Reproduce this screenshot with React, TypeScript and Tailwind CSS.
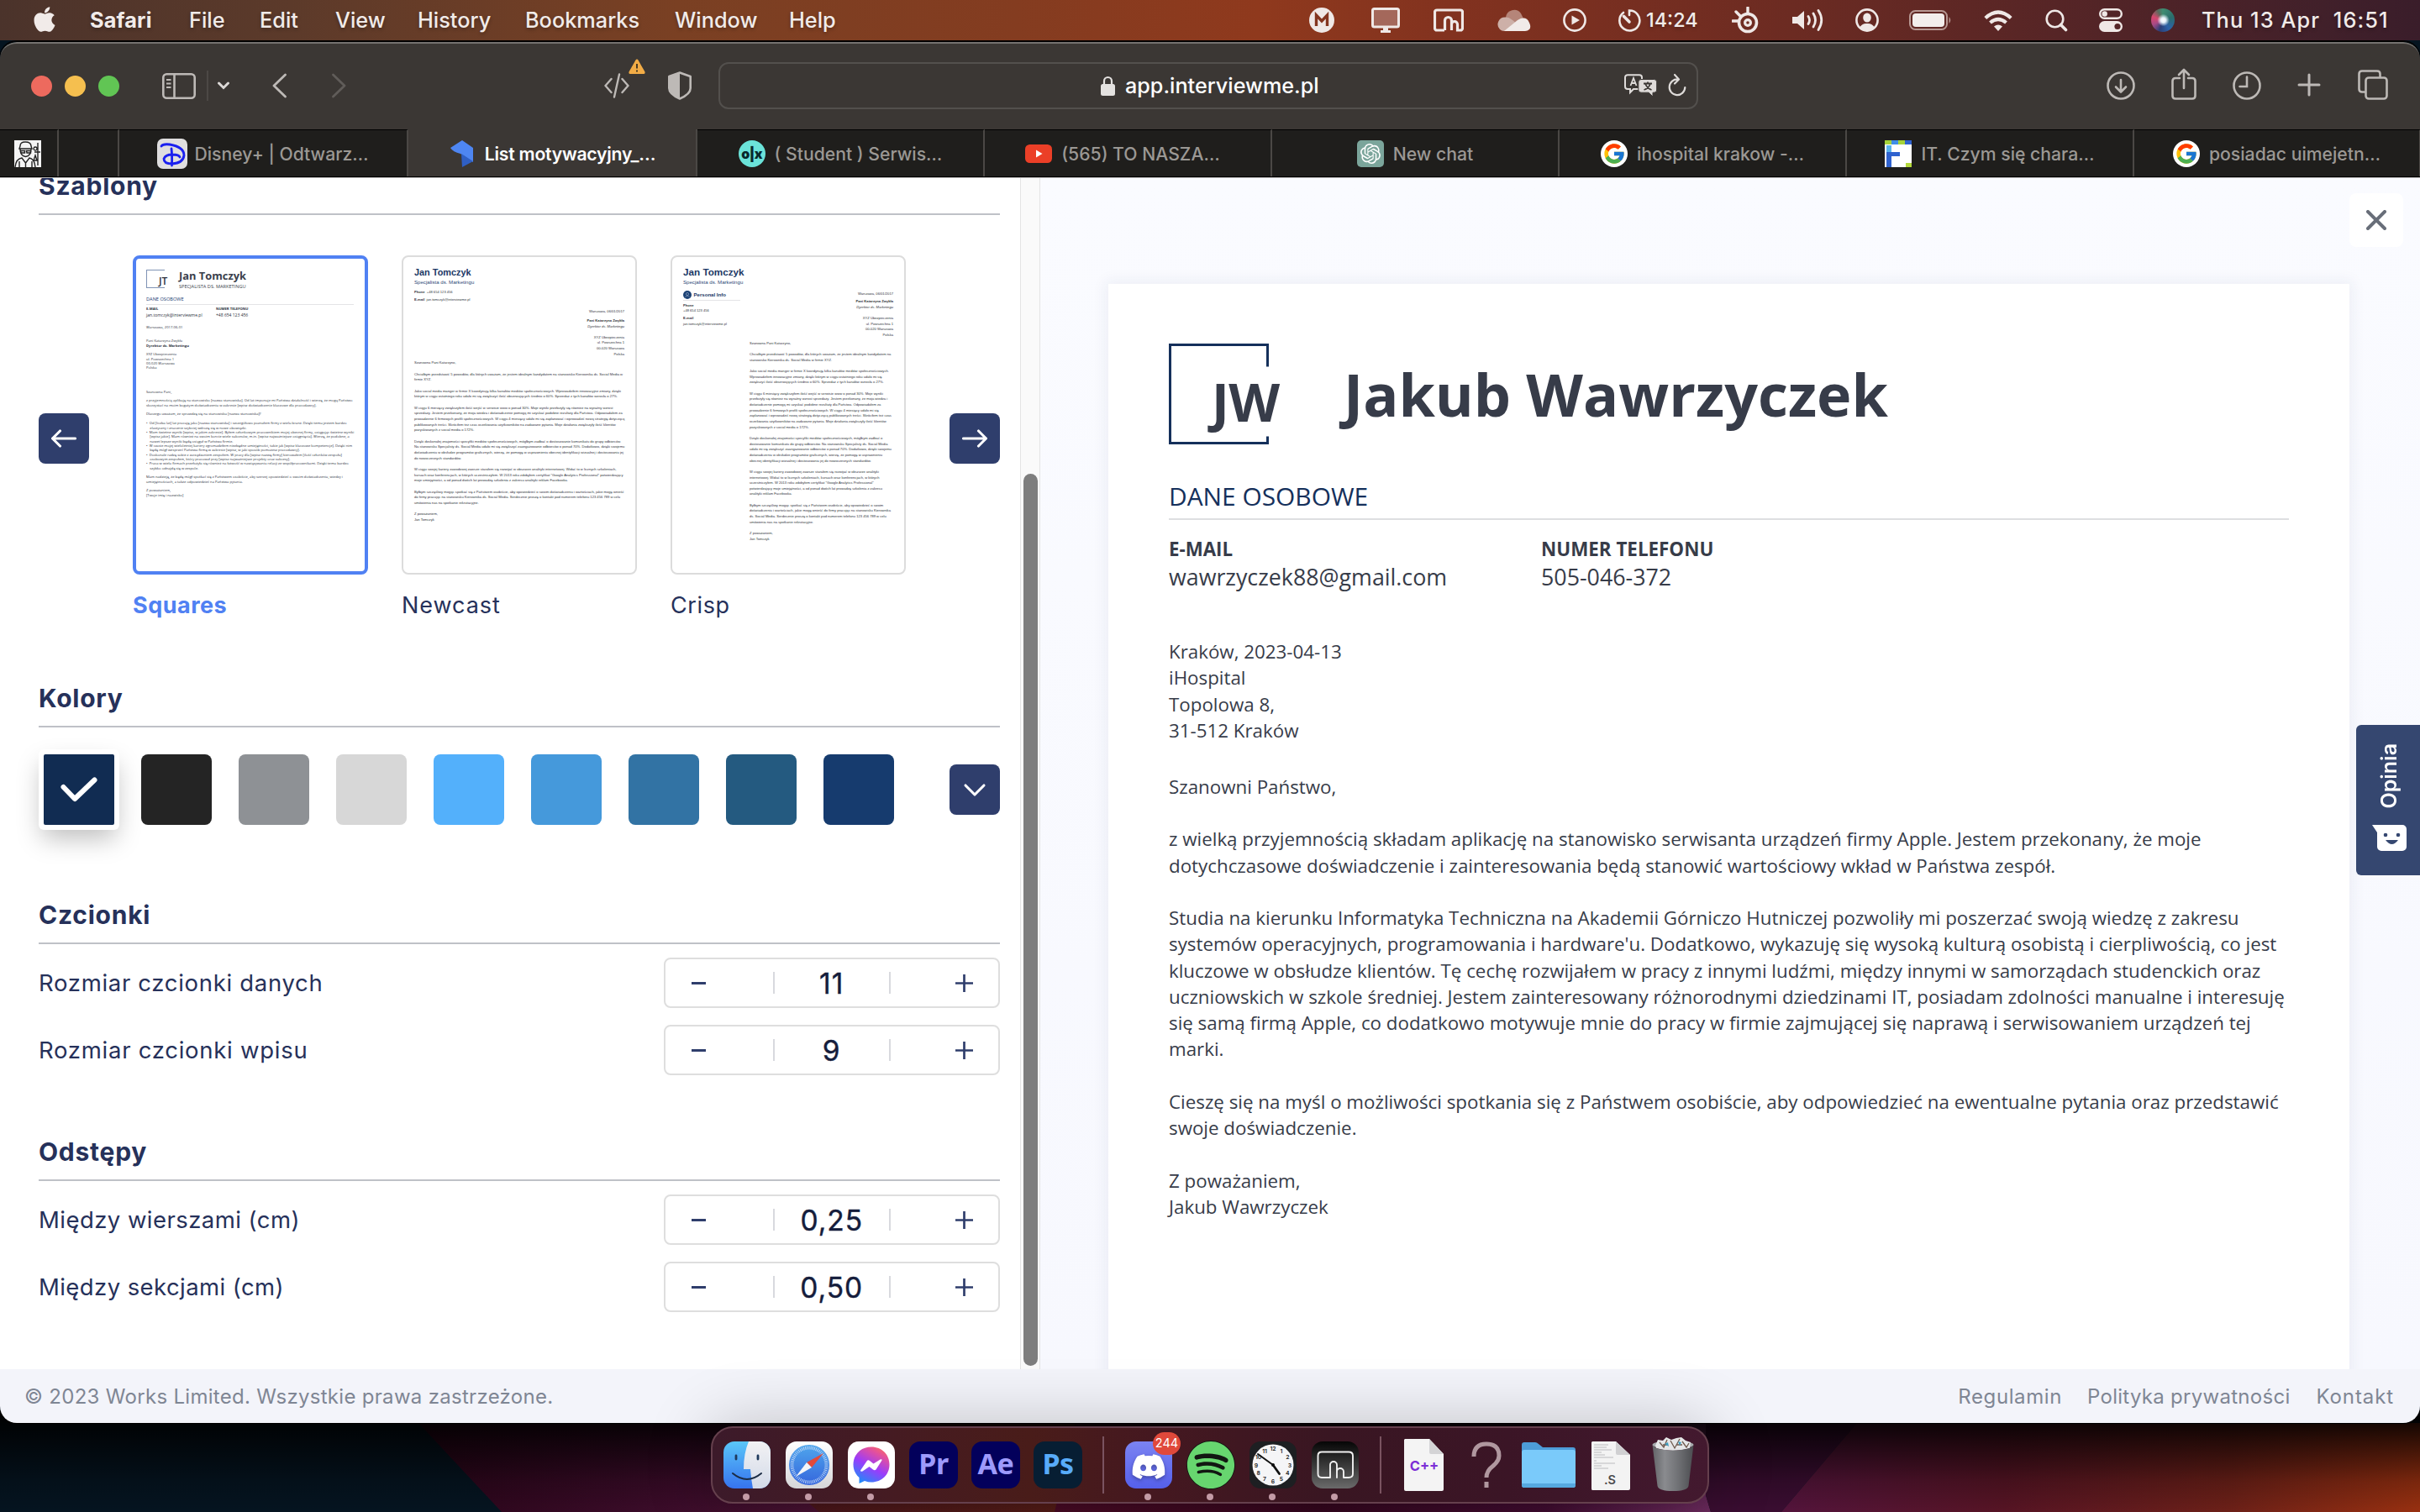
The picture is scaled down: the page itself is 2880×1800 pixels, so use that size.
import React from "react";
import { FaApple, FaDiscord, FaSpotify } from "react-icons/fa";
import { FcGoogle } from "react-icons/fc";
import { SiOpenai } from "react-icons/si";

/* ---------- Desktop ---------- */

function Wallpaper() {
  return (
    <svg className="absolute inset-0 h-[1800px] w-[2880px]" viewBox="0 0 2880 1800" preserveAspectRatio="none">
      <defs>
        <linearGradient id="wa" x1="0" x2="1" y1="0" y2="0">
          <stop offset="0" stopColor="#2a0519" />
          <stop offset="0.6" stopColor="#3c0c2a" />
          <stop offset="1" stopColor="#4a1233" />
        </linearGradient>
        <linearGradient id="wb" x1="0" x2="1" y1="0" y2="0">
          <stop offset="0" stopColor="#4a161a" />
          <stop offset="1" stopColor="#541c16" />
        </linearGradient>
        <linearGradient id="wc" x1="0" x2="1" y1="0" y2="0">
          <stop offset="0" stopColor="#480a24" />
          <stop offset="0.4" stopColor="#34061e" />
          <stop offset="0.75" stopColor="#400c30" />
          <stop offset="1" stopColor="#6a2a5c" />
        </linearGradient>
        <linearGradient id="wd" x1="0" x2="1" y1="0" y2="0">
          <stop offset="0" stopColor="#54143c" />
          <stop offset="0.35" stopColor="#561424" />
          <stop offset="0.7" stopColor="#6c2018" />
          <stop offset="1" stopColor="#983010" />
        </linearGradient>
        <linearGradient id="ws" x1="0" x2="0" y1="0" y2="1">
          <stop offset="0" stopColor="#000" stopOpacity="1" />
          <stop offset="0.3" stopColor="#000" stopOpacity="0.65" />
          <stop offset="0.7" stopColor="#000" stopOpacity="0.2" />
          <stop offset="1" stopColor="#000" stopOpacity="0" />
        </linearGradient>
      </defs>
      <rect width="2880" height="1800" fill="#051420" />
      <path d="M498 1694H1000L977 1800H597z" fill="url(#wa)" />
      <path d="M957 1694H1290L1262 1800H975L957 1785z" fill="url(#wb)" />
      <path d="M1280 1694H2030V1780L2036 1800H1255z" fill="url(#wc)" />
      <path d="M2030 1694H2210L2120 1800H2036L2030 1780z" fill="#3a0d31" />
      <path d="M2210 1694H2880V1800H2120z" fill="url(#wd)" />
      <rect y="1680" width="2880" height="120" fill="url(#ws)" />
      <path d="M635 48H1900V49H635z" fill="#a0671f" />
    </svg>
  );
}

/* ---------- Menu bar ---------- */

const menus: [string, string][] = [
  ["File", "w-[84px]"],
  ["Edit", "w-[90px]"],
  ["View", "w-[98px]"],
  ["History", "w-[128px]"],
  ["Bookmarks", "w-[178px]"],
  ["Window", "w-[136px]"],
  ["Help", "w-[60px]"],
];

function MenuBar() {
  return (
    <div className="relative flex h-12 items-center bg-[linear-gradient(90deg,#4b332b_0%,#5c3a2a_12%,#7a4023_28%,#843c20_42%,#8f391d_52%,#82321f_60%,#6c2b22_74%,#562526_85%,#41202a_96%,#3a1d2a_100%)] text-[25.3px] font-medium text-[#f1ebe9] [text-shadow:0_2px_4px_rgba(0,0,0,0.3)]">
      <div className="flex w-[1558px] shrink-0 items-center">
        <FaApple className="mb-[2px] ml-[39px] h-[34px] w-[28px] shrink-0" />
        <span className="ml-[40px] w-[118px] shrink-0 font-bold tracking-[0.150px]">Safari</span>
        {menus.map(([m, w]) => (
          <span key={m} className={`${w} shrink-0`}>
            {m}
          </span>
        ))}
      </div>
      <svg className="h-[30px] w-[30px] shrink-0" viewBox="0 0 30 30">
        <circle cx="15" cy="15" r="15" fill="#efe8e6" />
        <path d="M8.500 22V9L15 16L21.500 9V22" fill="none" stroke="#83351f" strokeWidth="3.400" />
      </svg>
      <svg className="ml-[44px] h-[30px] w-[34px] shrink-0" viewBox="0 0 34 30">
        <rect x="1.500" y="1.500" width="31" height="21.500" rx="2" fill="#a4685b" stroke="#efe8e6" strokeWidth="3" />
        <path d="M14 23h6v4h3v3H11v-3h3z" fill="#efe8e6" />
      </svg>
      <svg className="ml-[40px] h-[28px] w-[36px] shrink-0" viewBox="0 0 36 28">
        <path d="M13 26H4a2.500 2.500 0 0 1-2.500-2.500V4.500A2.500 2.500 0 0 1 4 2H32a2.500 2.500 0 0 1 2.500 2.500V23.500A2.500 2.500 0 0 1 32 26H28.500V19a3.500 3.500 0 0 0-7 0v7V14.500a4 4 0 0 0-8 0V26" fill="none" stroke="#efe8e6" strokeWidth="3.200" />
      </svg>
      <svg className="ml-[40px] h-[28px] w-[40px] shrink-0" viewBox="0 0 40 28">
        <path d="M10 11A10 10 0 0 1 28 6L31 12L20 20z" fill="#b58579" />
        <path d="M3 25A8.500 8.500 0 0 1 9 10.500C14 10 18 14 22 17L14 27H8Q5 27 3 25z" fill="#cdb0a8" />
        <path d="M8 27L24 14Q34 8 38 17Q42 26 33 27z" fill="#f1ebe9" />
      </svg>
      <svg className="ml-[38px] h-[28px] w-[28px] shrink-0" viewBox="0 0 28 28">
        <circle cx="14" cy="14" r="12.600" fill="none" stroke="#efe8e6" strokeWidth="2.600" />
        <path d="M10.500 8.500L20 14L10.500 19.500z" fill="#efe8e6" />
      </svg>
      <svg className="ml-[37px] h-[28px] w-[28px] shrink-0" viewBox="0 0 28 28" fill="none" stroke="#efe8e6" strokeWidth="2.600" strokeLinecap="round">
        <path d="M7 5A12 12 0 1 0 14 2.500V8" />
        <path d="M7.500 9.500L14 16" strokeWidth="3.600" />
      </svg>
      <span className="ml-[6px] w-[62px] shrink-0 text-[23.400px]">14:24</span>
      <svg className="ml-[40px] h-[32px] w-[32px] shrink-0" viewBox="0 0 32 32" fill="none" stroke="#efe8e6">
        <circle cx="19" cy="19" r="10.500" strokeWidth="3.600" />
        <circle cx="19" cy="19" r="3.400" strokeWidth="3.200" />
        <path d="M19 8V1M1 17H8M5 6L11 12" strokeWidth="3.400" strokeLinecap="round" />
      </svg>
      <svg className="ml-[40px] h-[28px] w-[40px] shrink-0" viewBox="0 0 40 28">
        <path d="M0 10H6L14 3V25L6 18H0z" fill="#efe8e6" />
        <path d="M19 9.500Q22 14 19 18.500M25 6Q30 14 25 22M31 2.500Q38.500 14 31 25.500" fill="none" stroke="#efe8e6" strokeWidth="2.800" strokeLinecap="round" />
      </svg>
      <svg className="ml-[35px] h-[28px] w-[28px] shrink-0" viewBox="0 0 28 28">
        <circle cx="14" cy="14" r="12.600" fill="none" stroke="#efe8e6" strokeWidth="2.600" />
        <ellipse cx="14" cy="11" rx="4.800" ry="5.600" fill="#efe8e6" />
        <path d="M5 23Q8 17.500 14 18Q20 17.500 23 23Q14 30 5 23z" fill="#efe8e6" />
      </svg>
      <svg className="ml-[36px] h-[24px] w-[51px] shrink-0" viewBox="0 0 51 24">
        <rect x="1" y="1" width="44" height="22" rx="6.500" fill="none" stroke="#b79792" strokeWidth="2" />
        <rect x="4" y="4" width="38" height="16" rx="4" fill="#f3eeec" />
        <path d="M47.500 8Q51 12 47.500 16z" fill="#b79792" />
      </svg>
      <svg className="ml-[38px] h-[25px] w-[34px] shrink-0" viewBox="0 0 34 25" fill="none" stroke="#efe8e6" strokeWidth="4.200">
        <path d="M1.800 9.500Q17 -4.500 32.200 9.500" />
        <path d="M7.500 15Q17 7 26.500 15" />
        <path d="M12 19.500Q17 15.500 22 19.500L17 25z" fill="#efe8e6" stroke="none" />
      </svg>
      <svg className="ml-[39px] h-[27px] w-[27px] shrink-0" viewBox="0 0 27 27" fill="none" stroke="#efe8e6">
        <circle cx="11.500" cy="11.500" r="9.800" strokeWidth="2.600" />
        <path d="M18.500 18.500L24.500 24.500" strokeWidth="3.600" strokeLinecap="round" />
      </svg>
      <svg className="ml-[37px] h-[28px] w-[28px] shrink-0" viewBox="0 0 28 28">
        <rect x="1.200" y="1.200" width="25.600" height="10.600" rx="5.300" fill="none" stroke="#efe8e6" strokeWidth="2.400" />
        <circle cx="6.700" cy="6.500" r="3.200" fill="#efe8e6" />
        <rect y="15" width="28" height="13" rx="6.500" fill="#efe8e6" />
        <circle cx="22" cy="21.500" r="3.600" fill="#552527" />
      </svg>
      <div className="ml-[34px] h-[28px] w-[28px] shrink-0 rounded-full bg-[radial-gradient(circle_at_52%_50%,#fff_0%,#e7f3fb_14%,rgba(255,255,255,0)_36%),conic-gradient(from_0deg,#3f8d72,#2b6d6c_20%,#2c62a8_40%,#2b3f78_55%,#a84a86_68%,#d8476e_80%,#5c6a5c_92%,#3f8d72)]" />
      <span className="ml-[32px] shrink-0 whitespace-pre tracking-[1.100px]">{"Thu 13 Apr  16:51"}</span>
    </div>
  );
}

/* ---------- Safari toolbar ---------- */

function Toolbar() {
  return (
    <div className="flex h-[104px] items-center rounded-t-[20px] border-t-2 border-[#75726f] bg-[#3b3734] pb-[2px]">
      <div className="ml-[37px] h-[25px] w-[25px] shrink-0 rounded-full bg-[#ed6a5e]" />
      <div className="ml-[15px] h-[25px] w-[25px] shrink-0 rounded-full bg-[#f5bf4f]" />
      <div className="ml-[15px] h-[25px] w-[25px] shrink-0 rounded-full bg-[#61c554]" />
      <svg className="ml-[51px] h-[31px] w-[40px] shrink-0" viewBox="0 0 40 31" fill="none" stroke="#bdb9b6" strokeWidth="2.600">
        <rect x="1.300" y="1.300" width="37.400" height="28.400" rx="4" />
        <path d="M14.500 1V30" />
        <path d="M5 8H10.500M5 12.500H10.500M5 17H10.500" strokeWidth="2" />
      </svg>
      <div className="ml-[13px] h-9 w-[2px] shrink-0 bg-[#4c4845]" />
      <svg className="ml-[10px] h-[10px] w-[16px] shrink-0" viewBox="0 0 16 10" fill="none" stroke="#dcd9d7" strokeWidth="3" strokeLinecap="round">
        <path d="M2.500 2L8 7.500L13.500 2" />
      </svg>
      <svg className="ml-[50px] h-[30px] w-[17px] shrink-0" viewBox="0 0 17 30" fill="none" stroke="#bdb9b6" strokeWidth="2.800" strokeLinecap="round" strokeLinejoin="round">
        <path d="M15.500 2L2 15L15.500 28" />
      </svg>
      <svg className="ml-[54px] h-[30px] w-[17px] shrink-0" viewBox="0 0 17 30" fill="none" stroke="#605c59" strokeWidth="2.800" strokeLinecap="round" strokeLinejoin="round">
        <path d="M1.500 2L15 15L1.500 28" />
      </svg>
      <div className="relative ml-[307px] h-[30px] w-[30px] shrink-0">
        <svg className="h-[30px] w-[30px]" viewBox="0 0 30 30" fill="none" stroke="#bdb9b6" strokeWidth="2.400" strokeLinecap="round">
          <path d="M8.500 7L1.500 15L8.500 23M21.500 7L28.500 15L21.500 23M18 1.500L12 28.500" />
        </svg>
        <svg className="absolute -top-[17px] left-[29px] h-[18px] w-[20px]" viewBox="0 0 20 18">
          <path d="M10 0.500Q11 0.500 11.500 1.500L19.500 15.500Q20 18 18 18H2Q0 18 0.500 15.500L8.500 1.500Q9 0.500 10 0.500z" fill="#f2ac46" />
          <path d="M10 6V11.500M10 13.500V15.500" stroke="#4a3a22" strokeWidth="2" />
        </svg>
      </div>
      <svg className="ml-[46px] h-[34px] w-[28px] shrink-0" viewBox="0 0 28 34">
        <path d="M14 1.500L26.700 6V20Q26.700 27 14 32.500Q1.300 27 1.300 20V6z" fill="none" stroke="#bdb9b6" strokeWidth="2.600" strokeLinejoin="round" />
        <path d="M14 1.500V32.500Q1.300 27 1.300 20V6z" fill="#bdb9b6" />
      </svg>
      <div className="ml-[32px] flex h-[56px] w-[1166px] shrink-0 items-center rounded-xl border-2 border-[#53504d]">
        <svg className="ml-[453px] h-[24px] w-[17px] shrink-0" viewBox="0 0 17 24">
          <rect y="10" width="17" height="14" rx="2.500" fill="#e4e2e0" />
          <path d="M4 11V6.500a4.500 4.500 0 0 1 9 0V11" fill="none" stroke="#e4e2e0" strokeWidth="2.200" />
        </svg>
        <span className="ml-[12px] w-[240px] shrink-0 pt-[2px] text-[25.200px] font-medium leading-none text-white">app.interviewme.pl</span>
        <svg className="ml-[354px] h-[28px] w-[39px] shrink-0" viewBox="0 0 39 28">
          <path d="M4 1.200H18a3 3 0 0 1 3 3V15a3 3 0 0 1-3 3H11L7 22V18H4a3 3 0 0 1-3-3V4.200a3 3 0 0 1 3-3z" fill="none" stroke="#dedbd9" strokeWidth="2" />
          <path d="M7.500 14L11 5L14.500 14M8.600 11H13.400" fill="none" stroke="#dedbd9" strokeWidth="1.800" />
          <path d="M20 6.500H35.500a3.200 3.200 0 0 1 3.200 3.200V19a3.200 3.200 0 0 1-3.200 3.200H34V27L29 22.200H20a3.200 3.200 0 0 1-3.200-3.200V9.700A3.200 3.200 0 0 1 20 6.500z" fill="#dedbd9" stroke="#3b3734" strokeWidth="1" />
          <path d="M23 11.500H33M28 9.500V11.500M31 11.500Q29.500 17 23.500 19M25 11.500Q27 17 32.500 19" fill="none" stroke="#3b3734" strokeWidth="1.800" />
        </svg>
        <svg className="mb-[3px] ml-[13px] h-[28px] w-[22px] shrink-0" viewBox="0 0 22 28" fill="none" stroke="#dedbd9" strokeWidth="2.200" strokeLinecap="round" strokeLinejoin="round">
          <path d="M12 7.500A9.300 9.300 0 1 0 20.300 17M8 2L13 7.500L8 12.500" />
        </svg>
      </div>
      <svg className="ml-[486px] h-[34px] w-[34px] shrink-0" viewBox="0 0 34 34" fill="none" stroke="#bdb9b6" strokeWidth="2.600" strokeLinecap="round" strokeLinejoin="round">
        <circle cx="17" cy="17" r="15.500" />
        <path d="M17 10V24M11 18.500L17 24.500L23 18.500" />
      </svg>
      <svg className="mb-[5px] ml-[43px] h-[38px] w-[30px] shrink-0" viewBox="0 0 30 38" fill="none" stroke="#bdb9b6" strokeWidth="2.600" strokeLinecap="round" strokeLinejoin="round">
        <path d="M10 12H5Q1.500 12 1.500 15.500V33Q1.500 36.500 5 36.500H25Q28.500 36.500 28.500 33V15.500Q28.500 12 25 12H20M15 24V2M9 8L15 2L21 8" />
      </svg>
      <svg className="ml-[43px] h-[34px] w-[34px] shrink-0" viewBox="0 0 34 34" fill="none" stroke="#bdb9b6" strokeWidth="2.600" strokeLinecap="round">
        <circle cx="17" cy="17" r="15.500" />
        <path d="M17 6.500V18H8.500" />
      </svg>
      <svg className="mb-[2px] ml-[43px] h-[28px] w-[28px] shrink-0" viewBox="0 0 28 28" fill="none" stroke="#bdb9b6" strokeWidth="3" strokeLinecap="round">
        <path d="M14 2V26M2 14H26" />
      </svg>
      <svg className="mb-[2px] ml-[44px] h-[36px] w-[36px] shrink-0" viewBox="0 0 36 36" fill="none" stroke="#bdb9b6" strokeWidth="2.600">
        <path d="M9 26.500H5Q1.500 26.500 1.500 23V5Q1.500 1.500 5 1.500H23Q26.500 1.500 26.500 5V9" />
        <rect x="9.500" y="9.500" width="25" height="25" rx="3.500" />
      </svg>
    </div>
  );
}

/* ---------- Tabs ---------- */

const Google = () => (
  <span className="flex h-8 w-8 shrink-0 items-center justify-center rounded-full bg-white">
    <FcGoogle className="h-[28px] w-[28px]" />
  </span>
);

function Tab({ w, icon, title, active }: { w: string; icon: React.ReactNode; title: string; active?: boolean }) {
  return (
    <div
      className={`${w} flex shrink-0 items-center justify-center gap-[11px] border-r-2 border-[#4b4845] pt-px ${
        active ? "bg-[#3b3734] font-semibold tracking-[-0.250px] text-white" : "border-t border-t-black bg-[#1f1e1c] font-medium text-[#9b9894]"
      }`}
    >
      {icon}
      <span className="whitespace-nowrap pt-[2px]">{title}</span>
    </div>
  );
}

function TabBar() {
  return (
    <div className="flex h-[57px] border-b border-black bg-[#1f1e1c] text-[21.200px]">
      <div className="flex w-[70px] shrink-0 items-center justify-center border-r-2 border-t border-[#4b4845] border-t-black pr-[2px]">
        <svg className="h-8 w-8" viewBox="0 0 32 32" fill="none" stroke="#222" strokeWidth="1.400">
          <rect width="32" height="32" fill="#f4f4f4" stroke="none" />
          <path d="M7 7Q7 2 13 2Q20 2 20 7L21 10H6z" />
          <path d="M7 10Q7 19 13.500 19.500Q20 19 20 10" />
          <path d="M7.500 12.500H12.500V15H8zM14.500 12.500H19.500V15H15z" />
          <path d="M1 32Q2 22 9 21L13.500 27L18 21Q24 22 25 32M13.500 27V32M6 25V32M21 25V32" />
          <path d="M25 8a2 2 0 1 0 .100 0M28 3V30M24 14H31M25 18L23 24H27z" />
        </svg>
      </div>
      <div className="w-[72px] shrink-0 border-r-2 border-t border-[#4b4845] border-t-black" />
      <Tab
        w="w-[344px]"
        title="Disney+ | Odtwarz…"
        icon={
          <svg className="-mr-[3px] h-9 w-9 shrink-0" viewBox="0 0 36 36">
            <rect width="36" height="36" rx="7" fill="#dfdedf" />
            <path d="M5 9Q7 6 15 7Q32 10 32 20Q31 29 18 30Q8 30 8 24Q10 19 18 19Q26 19 27 22M17 12Q18 20 17.500 32" fill="none" stroke="#1a20f0" strokeWidth="2.800" strokeLinecap="round" />
          </svg>
        }
      />
      <Tab
        w="w-[344px]"
        active
        title="List motywacyjny_…"
        icon={
          <svg className="h-8 w-8 shrink-0" viewBox="0 0 32 32">
            <path d="M16 0L29 9V26L14 16Q5 14 2 9z" fill="#4e86f2" />
            <path d="M15 16L29 25L16 32z" fill="#2f5fc4" />
          </svg>
        }
      />
      <Tab
        w="w-[342px]"
        title="( Student ) Serwis…"
        icon={
          <span className="flex h-8 w-8 shrink-0 items-center justify-center rounded-full bg-[#6be3d9] text-[16px] font-black leading-none tracking-[-0.500px] text-[#07282c]">o|x</span>
        }
      />
      <Tab
        w="w-[342px] pr-[12px]"
        title="(565) TO NASZA…"
        icon={
          <svg className="h-[22px] w-[32px] shrink-0" viewBox="0 0 32 22">
            <rect width="32" height="22" rx="5.500" fill="#eb3f27" />
            <path d="M13 6.500L20.500 11L13 15.500z" fill="#fff" />
          </svg>
        }
      />
      <Tab
        w="w-[342px]"
        title="New chat"
        icon={
          <span className="flex h-8 w-8 shrink-0 items-center justify-center rounded-[5px] bg-[#7ba59b]">
            <SiOpenai className="h-[24px] w-[24px] text-white" />
          </span>
        }
      />
      <Tab w="w-[342px]" title="ihospital krakow -…" icon={<Google />} />
      <Tab
        w="w-[342px]"
        title="IT. Czym się chara…"
        icon={
          <svg className="h-8 w-8 shrink-0" viewBox="0 0 32 32">
            <rect width="32" height="32" fill="#fff" />
            <path d="M0 0H8V5H0zM16 0H24V5H16z" fill="#a5d43a" />
            <path d="M8 0H16V5H8z" fill="#3f8ee8" />
            <path d="M24 0H32V5H24z" fill="#2f62cf" />
            <path d="M2 6H8V32H2zM8 14H18V19H8z" fill="#2f62cf" />
            <path d="M2 6H8V14H2z" fill="#59b4ee" />
            <path d="M25 27H32V32H25z" fill="#b4d93c" />
          </svg>
        }
      />
      <Tab w="w-[341px]" title="posiadac uimejetn…" icon={<Google />} />
    </div>
  );
}

/* ---------- Left panel ---------- */

function Heading({ children }: { children: React.ReactNode }) {
  return (
    <h2 className="h-[68px] border-b-2 border-[#bfc1c7] text-[30px] font-bold leading-[66px] tracking-[0.750px] text-[#26315a]">{children}</h2>
  );
}

const squaresBody = [
  "z przyjemnością aplikuję na stanowisko [nazwa stanowiska]. Od lat imponuje mi Państwa działalność i wierzę, że mogą Państwo",
  "skorzystać na moim bogatym doświadczeniu w zakresie [wpisz doświadczenie kluczowe dla pracodawcy].",
  "",
  "Dlaczego uważam, że sprawdzę się na stanowisku [nazwa stanowiska]?",
  "",
  "•  Od [liczba lat] lat pracuję jako [nazwa stanowiska] i szczegółowo poznałem firmy z wielu branż. Dzięki temu jestem bardzo",
  "    elastyczny i znacznie szybciej wdrożę się w nowe obowiązki.",
  "•  Mam świetne wyniki [wpisz, w jakim zakresie]. Byłem członkowym pracownikiem mojej obecnej firmy, osiągając świetne wyniki",
  "    [wpisz jakie]. Mam również na swoim koncie wiele sukcesów, m.in. [wpisz najważniejsze osiągnięcia]. Wierzę, że podobne, a",
  "    nawet lepsze wyniki będę osiągał w Państwa firmie.",
  "•  W czasie mojej wieloletniej kariery zgromadziłem niezbędne umiejętności, takie jak [wpisz kluczowe kompetencje]. Dzięki nim",
  "    będę mógł wesprzeć Państwa firmę w zakresie [wpisz, w jaki sposób pomożesz pracodawcy].",
  "•  Doskonale radzę sobie z zarządzaniem zespołem. W pracy dla [wpisz nazwę firmy] kierowałem [ilość członków zespołu]",
  "    osobowym zespołem, który pracował przy [wpisz najważniejsze projekty oraz sukcesy].",
  "•  Praca w wielu firmach przełożyła się również na łatwość w nawiązywaniu relacji ze współpracownikami. Dzięki temu bardzo",
  "    szybko odnajdę się w zespole.",
  "",
  "Mam nadzieję, że będę mógł spotkać się z Państwem osobiście, aby szerzej opowiedzieć o swoim doświadczeniu, wiedzy i",
  "umiejętnościach, a także odpowiedzieć na Państwa pytania.",
  "",
  "Z poważaniem,",
  "[Twoje imię i nazwisko]",
];

function Lines({ items, className }: { items: string[]; className: string }) {
  return (
    <div className={className}>
      {items.map((t, i) => (
        <div key={i} className={t.startsWith("*") ? "font-bold" : ""}>
          {t.replace("*", "") || "\u00a0"}
        </div>
      ))}
    </div>
  );
}

function SquaresThumb() {
  return (
    <div className="h-[380px] w-[280px] overflow-hidden whitespace-pre rounded-lg border-4 border-[#5081f3] bg-white pl-[12px] pr-[13px] pt-[13px] font-['Open_Sans',sans-serif] text-[#2c313d]">
      <div className="flex">
        <div className="relative h-[22px] w-[22px] border border-r-0 border-[#7f93b5]">
          <span className="absolute left-[14px] top-[5px] text-[12px] font-semibold leading-[16px]">JT</span>
        </div>
        <div className="ml-[17px] w-[200px] leading-none text-[#3a3f4c]">
          <div className="text-[12.850px] font-bold leading-[15px]">Jan Tomczyk</div>
          <div className="mt-[1px] text-[5.620px] leading-[8px]">SPECJALISTA DS. MARKETINGU</div>
        </div>
      </div>
      <div className="mt-[7px] h-[11px] border-b border-[#e4e4e6] text-[5.640px] leading-[9px] text-[#1d3d73]">DANE OSOBOWE</div>
      <div className="mt-[2px] flex text-[5px] leading-[6.500px]">
        <div className="w-[83px]">
          <div className="text-[4.200px] font-bold">E-MAIL</div>
          <div>jan.tomczyk@interviewme.pl</div>
        </div>
        <div>
          <div className="text-[4.200px] font-bold">NUMER TELEFONU</div>
          <div>+48 654 123 456</div>
        </div>
      </div>
      <Lines
        className="mt-[9px] text-[4.170px] leading-[5.370px]"
        items={["Warszawa, 2017-06-01", "", "", "Pani Katarzyna Zwykła", "*Dyrektor ds. Marketingu", "", "XYZ Ubezpieczenia", "ul. Powszechna 1", "00-020 Warszawa", "Polska"]}
      />
      <Lines className="mt-[23px] text-[4.170px] leading-[5.350px]" items={["Szanowna Pani,", "", ...squaresBody]} />
    </div>
  );
}

const address = ["", "XYZ Ubezpieczenia", "ul. Powszechna 1", "00-020 Warszawa", "Polska"];

function NewcastThumb() {
  return (
    <div className="h-[380px] w-[280px] overflow-hidden whitespace-pre rounded-lg border-2 border-[#dcdcdc] bg-white pl-[13px] pr-[13px] pt-[11px] font-['Liberation_Sans',Arial,sans-serif] text-[#30333a]">
      <div className="text-[10.900px] font-bold leading-[14px] text-[#1b3765]">Jan Tomczyk</div>
      <div className="text-[6.120px] leading-[9px] text-[#2f4a78]">Specjalista ds. Marketingu</div>
      <div className="mt-[4px] text-[4.100px] leading-[8.600px]">
        <b>Phone</b>  +48 654 123 456
      </div>
      <div className="text-[4.100px] leading-[8.600px]">
        <b>E-mail</b>  jan.tomczyk@interviewme.pl
      </div>
      <div className="mt-[7px] text-right text-[4.130px] leading-[6.650px]">
        <div>Warszawa, 06/01/2017</div>
        <div className="mt-[4px] font-bold">Pani Katarzyna Zwykła</div>
        <div className="italic">Dyrektor ds. Marketingu</div>
        <Lines className="" items={address} />
      </div>
      <Lines
        className="mt-[4px] text-[4.130px] leading-[6.650px]"
        items={[
          "Szanowna Pani Katarzyno,",
          "",
          "Chciałbym przedstawić 5 powodów, dla których uważam, że jestem idealnym kandydatem na stanowisko Kierownika ds. Social Media w",
          "firmie XYZ.",
          "",
          "Jako social media manger w firmie X koordynuję kilka kanałów mediów społecznościowych. Wprowadziłem innowacyjne zmiany, dzięki",
          "którym w ciągu ostatniego roku udało mi się zwiększyć ilość obserwujących średnio o 60%. Sprzedaż z tych kanałów wzrosła o 27%.",
          "",
          "W ciągu 6 miesięcy zwiększyłem ilość wejść w serwisie www o ponad 30%. Moje wyniki przełożyły się również na wyraźny wzrost",
          "sprzedaży. Jestem przekonany, że moja wiedza i doświadczenie pomogą mi uzyskać podobne rezultaty dla Państwa. Odpowiadałem za",
          "prowadzenie 6 firmowych profili społecznościowych. W ciągu 4 miesięcy udało mi się zaplanować i wprowadzić nową strategię dotyczącą",
          "publikowanych treści. Skróciłem też czas oczekiwania użytkowników na zadawane pytania. Moje działania zwiększyły ilość klientów",
          "pozyskiwanych z social media o 172%.",
          "",
          "Dzięki doskonałej znajomości specyfiki mediów społecznościowych, mógłbym zadbać o dostosowanie komunikatu do grupy odbiorców.",
          "Na stanowisku Specjalisty ds. Social Media udało mi się zwiększyć zaangażowanie odbiorców o ponad 70%. Dodatkowo, dzięki swojemu",
          "doświadczeniu w obsłudze programów graficznych, wierzę, że pomogę w usprawnieniu obecnej identyfikacji wizualnej i dostosowaniu jej",
          "do nowoczesnych standardów.",
          "",
          "W ciągu swojej kariery zawodowej zawsze starałem się rozwijać w obszarze analityki internetowej. Widać to w licznych szkoleniach,",
          "kursach oraz konferencjach, w których uczestniczyłem. W 2013 roku zdobyłem certyfikat \"Google Analytics Professional\" potwierdzający",
          "moje umiejętności, a od ponad dwóch lat prowadzę szkolenia z zakresu analityki reklam Facebooka.",
          "",
          "Byłbym szczęśliwy mogąc spotkać się z Państwem osobiście, aby opowiedzieć o swoim doświadczeniu i wartościach, jakie mogę wnieść",
          "do firmy pracując na stanowisku Kierownika ds. Social Media. Serdecznie proszę o kontakt pod numerem telefonu 123 456 789 w celu",
          "umówienia nas na spotkanie rekrutacyjne.",
          "",
          "Z poważaniem,",
          "Jan Tomczyk",
        ]}
      />
    </div>
  );
}

function CrispThumb() {
  return (
    <div className="h-[380px] w-[280px] overflow-hidden whitespace-pre rounded-lg border-2 border-[#dcdcdc] bg-white pl-[13px] pr-[13px] pt-[11px] font-['Liberation_Sans',Arial,sans-serif] text-[#30333a]">
      <div className="text-[11.700px] font-bold leading-[14px] text-[#1b3765]">Jan Tomczyk</div>
      <div className="text-[6.120px] leading-[9px] text-[#2f4a78]">Specjalista ds. Marketingu</div>
      <div className="flex justify-between">
        <div className="mt-[6px] w-[68px]">
          <div className="flex h-[12px] items-start border-b border-[#e4e4e6] text-[6.080px] font-bold leading-[10px] text-[#1b3765]">
            <svg className="mr-[2.500px] h-[10px] w-[10px]" viewBox="0 0 10 10">
              <circle cx="5" cy="5" r="5" fill="#1c4275" />
              <circle cx="5" cy="4" r="1.600" fill="none" stroke="#9fb2cc" strokeWidth="0.600" />
              <path d="M2.300 7.800Q5 4.500 7.700 7.800" fill="none" stroke="#9fb2cc" strokeWidth="0.600" />
            </svg>
            Personal Info
          </div>
          <div className="mt-[2.500px] text-[4.100px] leading-[6.700px]">
            <div className="font-bold">Phone</div>
            <div>+48 654 123 456</div>
            <div className="mt-[2px] font-bold">E-mail</div>
            <div>jan.tomczyk@interviewme.pl</div>
          </div>
        </div>
        <div className="mt-[6.500px] text-right text-[4.130px] leading-[6.650px]">
          <div>Warszawa, 06/01/2017</div>
          <div className="mt-[3px] font-bold">Pani Katarzyna Zwykła</div>
          <div className="italic">Dyrektor ds. Marketingu</div>
          <Lines className="" items={address} />
        </div>
      </div>
      <Lines
        className="ml-[79px] mt-[3px] text-[4.100px] leading-[6.650px]"
        items={[
          "Szanowna Pani Katarzyno,",
          "",
          "Chciałbym przedstawić 5 powodów, dla których uważam, że jestem idealnym kandydatem na",
          "stanowisko Kierownika ds. Social Media w firmie XYZ.",
          "",
          "Jako social media manger w firmie X koordynuję kilka kanałów mediów społecznościowych.",
          "Wprowadziłem innowacyjne zmiany, dzięki którym w ciągu ostatniego roku udało mi się",
          "zwiększyć ilość obserwujących średnio o 60%. Sprzedaż z tych kanałów wzrosła o 27%.",
          "",
          "W ciągu 6 miesięcy zwiększyłem ilość wejść w serwisie www o ponad 30%. Moje wyniki",
          "przełożyły się również na wyraźny wzrost sprzedaży. Jestem przekonany, że moja wiedza i",
          "doświadczenie pomogą mi uzyskać podobne rezultaty dla Państwa. Odpowiadałem za",
          "prowadzenie 6 firmowych profili społecznościowych. W ciągu 4 miesięcy udało mi się",
          "zaplanować i wprowadzić nową strategię dotyczącą publikowanych treści. Skróciłem też czas",
          "oczekiwania użytkowników na zadawane pytania. Moje działania zwiększyły ilość klientów",
          "pozyskiwanych z social media o 172%.",
          "",
          "Dzięki doskonałej znajomości specyfiki mediów społecznościowych, mógłbym zadbać o",
          "dostosowanie komunikatu do grupy odbiorców. Na stanowisku Specjalisty ds. Social Media",
          "udało mi się zwiększyć zaangażowanie odbiorców o ponad 70%. Dodatkowo, dzięki swojemu",
          "doświadczeniu w obsłudze programów graficznych, wierzę, że pomogę w usprawnieniu",
          "obecnej identyfikacji wizualnej i dostosowaniu jej do nowoczesnych standardów.",
          "",
          "W ciągu swojej kariery zawodowej zawsze starałem się rozwijać w obszarze analityki",
          "internetowej. Widać to w licznych szkoleniach, kursach oraz konferencjach, w których",
          "uczestniczyłem. W 2013 roku zdobyłem certyfikat \"Google Analytics Professional\"",
          "potwierdzający moje umiejętności, a od ponad dwóch lat prowadzę szkolenia z zakresu",
          "analityki reklam Facebooka.",
          "",
          "Byłbym szczęśliwy mogąc spotkać się z Państwem osobiście, aby opowiedzieć o swoim",
          "doświadczeniu i wartościach, jakie mogę wnieść do firmy pracując na stanowisku Kierownika",
          "ds. Social Media. Serdecznie proszę o kontakt pod numerem telefonu 123 456 789 w celu",
          "umówienia nas na spotkanie rekrutacyjne.",
          "",
          "Z poważaniem,",
          "Jan Tomczyk",
        ]}
      />
    </div>
  );
}

function NavButton({ d }: { d: string }) {
  return (
    <button className="flex h-[60px] w-[60px] shrink-0 items-center justify-center rounded-lg bg-[#2f3e6c]">
      <svg className="h-[30px] w-[30px]" viewBox="0 0 30 30" fill="none" stroke="#fff" strokeWidth="3.100" strokeLinecap="round" strokeLinejoin="round">
        <path d={d} />
      </svg>
    </button>
  );
}

const swatches = ["bg-[#242424]", "bg-[#8e9195]", "bg-[#d7d7d7]", "bg-[#53b0fb]", "bg-[#4599db]", "bg-[#3273a4]", "bg-[#245a80]", "bg-[#163b6e]"];

function Stepper({ label, track, value }: { label: string; track: string; value: string }) {
  return (
    <div className="flex h-[60px] items-center justify-between">
      <span className={`${track} pt-[2px] text-[27.500px] text-[#26315a]`}>{label}</span>
      <div className="flex h-[60px] w-[400px] items-center rounded-lg border-2 border-[#dedede] bg-white">
        <span className="ml-[31px] h-[3px] w-[17px] bg-[#2f3e6c]" />
        <span className="ml-[80px] h-[26px] w-[1.500px] bg-[#d8d9de]" />
        <span className="w-[136.500px] pt-[2px] text-center text-[33.500px] tracking-[1px] text-[#151d3c] [-webkit-text-stroke:0.400px_#151d3c]">{value}</span>
        <span className="h-[26px] w-[1.500px] bg-[#d8d9de]" />
        <svg className="ml-[77px] h-[21px] w-[21px]" viewBox="0 0 21 21" stroke="#2f3e6c" strokeWidth="2.700">
          <path d="M10.500 0V21M0 10.500H21" />
        </svg>
      </div>
    </div>
  );
}

function LeftPanel() {
  return (
    <div className="h-[1418px] w-[1214px] shrink-0 overflow-hidden bg-white pl-[46px] pr-[24px]">
      <div className="-mt-[24px]">
        <Heading>Szablony</Heading>
        <div className="mt-12 flex items-center justify-between">
          <NavButton d="M28.500 15H1.500M10.500 6L1.500 15L10.500 24" />
          <div className="flex gap-10 text-[27px] leading-[40px] text-[#26315a]">
            <div>
              <SquaresThumb />
              <div className="mt-[17px] -mb-[2px] font-bold tracking-[0.500px] text-[#5081f3]">Squares</div>
            </div>
            <div>
              <NewcastThumb />
              <div className="mt-[17px] -mb-[2px] tracking-[0.950px]">Newcast</div>
            </div>
            <div>
              <CrispThumb />
              <div className="mt-[17px] -mb-[2px] tracking-[0.600px]">Crisp</div>
            </div>
          </div>
          <NavButton d="M1.500 15H28.500M19.500 6L28.500 15L19.500 24" />
        </div>
      </div>
      <div className="mt-[59px]">
        <Heading>Kolory</Heading>
        <div className="mt-8 flex items-center justify-between pl-[6px]">
          <div className="flex gap-8">
            <div className="flex h-[84px] w-[84px] items-center justify-center rounded-[2px] bg-[#112c52] shadow-[0_0_0_6px_#fff,0_14px_30px_2px_rgba(0,0,0,0.26)]">
              <svg className="h-[32px] w-[46px]" viewBox="0 0 46 32" fill="none" stroke="#fff" strokeWidth="6" strokeLinecap="round" strokeLinejoin="round">
                <path d="M4.500 13L18 27L41.500 4.500" />
              </svg>
            </div>
            {swatches.map((c) => (
              <div key={c} className={`h-[84px] w-[84px] rounded-lg ${c}`} />
            ))}
          </div>
          <NavButton d="M4 10L15 21L26 10" />
        </div>
      </div>
      <div className="mt-[74px]">
        <Heading>Czcionki</Heading>
        <div className="mt-4 flex flex-col gap-5">
          <Stepper label="Rozmiar czcionki danych" track="tracking-[0.690px]" value="11" />
          <Stepper label="Rozmiar czcionki wpisu" track="tracking-[0.730px]" value="9" />
        </div>
      </div>
      <div className="mt-[58px]">
        <Heading>Odstępy</Heading>
        <div className="mt-4 flex flex-col gap-5">
          <Stepper label="Między wierszami (cm)" track="tracking-[0.450px]" value="0,25" />
          <Stepper label="Między sekcjami (cm)" track="tracking-[0.420px]" value="0,50" />
        </div>
      </div>
    </div>
  );
}

/* ---------- Letter preview ---------- */

const letter = [
  "z wielką przyjemnością składam aplikację na stanowisko serwisanta urządzeń firmy Apple. Jestem przekonany, że moje",
  "dotychczasowe doświadczenie i zainteresowania będą stanowić wartościowy wkład w Państwa zespół.",
  "",
  "Studia na kierunku Informatyka Techniczna na Akademii Górniczo Hutniczej pozwoliły mi poszerzać swoją wiedzę z zakresu",
  "systemów operacyjnych, programowania i hardware'u. Dodatkowo, wykazuję się wysoką kulturą osobistą i cierpliwością, co jest",
  "kluczowe w obsłudze klientów. Tę cechę rozwijałem w pracy z innymi ludźmi, między innymi w samorządach studenckich oraz",
  "uczniowskich w szkole średniej. Jestem zainteresowany różnorodnymi dziedzinami IT, posiadam zdolności manualne i interesuję",
  "się samą firmą Apple, co dodatkowo motywuje mnie do pracy w firmie zajmującej się naprawą i serwisowaniem urządzeń tej",
  "marki.",
  "",
  "Cieszę się na myśl o możliwości spotkania się z Państwem osobiście, aby odpowiedzieć na ewentualne pytania oraz przedstawić",
  "swoje doświadczenie.",
  "",
  "Z poważaniem,",
  "Jakub Wawrzyczek",
];

function Preview() {
  return (
    <div className="relative flex h-[1418px] flex-1 overflow-hidden bg-[linear-gradient(180deg,#fafbff,#f7f8fe)]">
      <div className="ml-[81px] mt-[126px] h-[1400px] w-[1477px] shrink-0 whitespace-nowrap bg-white px-[72px] pt-[71px] font-['Open_Sans',sans-serif] text-[#373c49] shadow-[0_0_16px_4px_rgba(40,50,100,0.06)]">
        <div className="flex items-center">
          <div className="relative h-[120px] w-[120px] shrink-0">
            <svg className="h-[120px] w-[120px]" viewBox="0 0 120 120" fill="none" stroke="#15305b" strokeWidth="3">
              <path d="M117.500 27.500V1.500H1.500V118.500H117.500V110.500" />
            </svg>
            <span className="absolute left-[51px] top-[29px] text-[63px] font-bold leading-[80px] tracking-[-0.500px]">JW</span>
          </div>
          <h1 className="ml-[88px] text-[70px] font-bold leading-[90px]">Jakub Wawrzyczek</h1>
        </div>
        <div className="mt-[40px] h-[50px] border-b-2 border-[#dedfe1] text-[29.900px] leading-[44px] text-[#15305b]">DANE OSOBOWE</div>
        <div className="mt-[19px] flex">
          <div className="w-[443px]">
            <div className="text-[22.300px] font-bold leading-[32px]">E-MAIL</div>
            <div className="text-[26.800px] leading-[34px]">wawrzyczek88@gmail.com</div>
          </div>
          <div>
            <div className="text-[22.400px] font-bold leading-[32px]">NUMER TELEFONU</div>
            <div className="text-[26.800px] leading-[34px]">505-046-372</div>
          </div>
        </div>
        <Lines className="mt-[56px] text-[22.340px] leading-[31.250px]" items={["Kraków, 2023-04-13", "iHospital", "Topolowa 8,", "31-512 Kraków"]} />
        <Lines className="mt-[35.800px] text-[22.340px] leading-[31.250px]" items={["Szanowni Państwo,", "", ...letter]} />
      </div>

      <button className="absolute right-[20px] top-[18px] flex h-16 w-16 items-center justify-center rounded-lg bg-white">
        <svg className="h-6 w-6" viewBox="0 0 24 24" stroke="#686e79" strokeWidth="4" strokeLinecap="round">
          <path d="M2 2L22 22M22 2L2 22" />
        </svg>
      </button>

      <div className="absolute right-0 top-[651px] flex h-[179px] w-[76px] flex-col items-center rounded-l-[6px] bg-[#354770] pl-[2px] pt-[22px]">
        <span className="rotate-180 text-[25px] font-semibold leading-[40px] text-white [writing-mode:vertical-rl]">Opinia</span>
        <svg className="mt-[19px] h-[31px] w-[41px]" viewBox="0 0 41 31">
          <path d="M0 0H36a5 5 0 0 1 5 5V26a5 5 0 0 1-5 5H11a5 5 0 0 1-5-5V9z" fill="#fff" />
          <circle cx="16" cy="12" r="2.300" fill="#354770" />
          <circle cx="31" cy="12" r="2.300" fill="#354770" />
          <path d="M16 18Q23.500 28 31 18z" fill="#354770" />
        </svg>
      </div>
    </div>
  );
}

/* ---------- Dock ---------- */

function Cell({ children, dot }: { children: React.ReactNode; dot?: boolean }) {
  return (
    <div className="relative flex h-[90px] w-14 shrink-0 items-center justify-center pb-[3px]">
      {children}
      {dot && <span className="absolute bottom-[4px] left-[23px] h-2 w-2 rounded-full bg-[#c39ba6]" />}
    </div>
  );
}

function Adobe({ t, c }: { t: string; c: string }) {
  return (
    <div className={`${c} flex h-14 w-[58px] shrink-0 items-center justify-center rounded-[13px] pb-[3px] font-['Noto_Sans','Open_Sans',sans-serif] text-[34px] font-bold leading-none tracking-[-0.500px]`}>{t}</div>
  );
}

const hours = [1, 2, 3, 4, 5, 6, 7, 8, 9, 10, 11, 12];
const ticks = Array.from({ length: 60 }, (_, i) => i);

function Dock() {
  return (
    <div className="relative mx-auto mt-[4px] flex h-[92px] w-[1188px] items-start rounded-[26px] border-2 border-[#65404d] bg-[linear-gradient(90deg,#3c1a2a_0%,#451b22_18%,#491c19_32%,#451820_44%,#391622_62%,#3b1526_80%,#43192f_100%)] pl-[13px] shadow-[0_0_80px_rgba(0,0,0,0.24)]">
      <div className="flex gap-[18px]">
        <Cell dot>
          <svg className="h-14 w-14" viewBox="0 0 56 56">
            <defs>
              <linearGradient id="fa" x1="0" x2="0" y1="0" y2="1">
                <stop offset="0" stopColor="#5ac6f9" />
                <stop offset="1" stopColor="#3673ee" />
              </linearGradient>
              <linearGradient id="fb" x1="0" x2="0" y1="0" y2="1">
                <stop offset="0" stopColor="#f2f2f4" />
                <stop offset="1" stopColor="#d3dae8" />
              </linearGradient>
              <clipPath id="fc">
                <rect width="56" height="56" rx="13" />
              </clipPath>
            </defs>
            <g clipPath="url(#fc)">
              <rect width="56" height="56" fill="url(#fa)" />
              <path d="M30 0H56V56H35Q33 46 32 33H24Q24 14 30 0z" fill="url(#fb)" />
            </g>
            <path d="M15 17V21M41 17V21" stroke="#1f3a5c" strokeWidth="2.800" strokeLinecap="round" />
            <path d="M11 38Q28 52 45 38" fill="none" stroke="#1b2c44" strokeWidth="2" strokeLinecap="round" />
          </svg>
        </Cell>
        <Cell dot>
          <svg className="h-14 w-14" viewBox="0 0 56 56">
            <defs>
              <linearGradient id="sa" x1="0" x2="0" y1="0" y2="1">
                <stop offset="0" stopColor="#fff" />
                <stop offset="1" stopColor="#d6d6d8" />
              </linearGradient>
              <linearGradient id="sb" x1="0" x2="0" y1="0" y2="1">
                <stop offset="0" stopColor="#4fa6ec" />
                <stop offset="1" stopColor="#3566dd" />
              </linearGradient>
            </defs>
            <rect width="56" height="56" rx="13" fill="url(#sa)" />
            <circle cx="28" cy="28" r="24" fill="url(#sb)" />
            {ticks.map((i) => (
              <path key={i} d="M28 5.500V9.500" stroke="#cfe0f7" strokeWidth="0.800" transform={`rotate(${i * 6} 28 28)`} />
            ))}
            <path d="M45 14L31 31L25 25z" fill="#e2493a" />
            <path d="M12 42L31 31L25 25z" fill="#f3f5f8" />
          </svg>
        </Cell>
        <Cell dot>
          <svg className="h-14 w-14" viewBox="0 0 56 56">
            <defs>
              <linearGradient id="ma" x1="0.250" x2="0.800" y1="1" y2="0">
                <stop offset="0" stopColor="#1f8cf8" />
                <stop offset="0.450" stopColor="#9a3cfb" />
                <stop offset="0.800" stopColor="#e14fa0" />
                <stop offset="1" stopColor="#fb6a62" />
              </linearGradient>
            </defs>
            <rect width="56" height="56" rx="13" fill="#fff" />
            <path d="M28 6.500C15.500 6.500 6.500 15.500 6.500 27.500C6.500 34 9 39 13.500 43V50L20 47Q24 48.500 28 48.500C40.500 48.500 49.500 39.500 49.500 27.500S40.500 6.500 28 6.500z" fill="url(#ma)" />
            <path d="M15 34.500L22.500 23.500Q24 21.500 26 23L30.500 26.500L38.500 21.500Q41 20.500 40.500 22.500L33.500 33.500Q32 35 30 33.500L25.500 30L17.500 35.500Q15 36.500 15 34.500z" fill="#fff" />
          </svg>
        </Cell>
        <Cell>
          <Adobe t="Pr" c="bg-[#03005b] text-[#9d9afb]" />
        </Cell>
        <Cell>
          <Adobe t="Ae" c="bg-[#03005b] text-[#9d9afb]" />
        </Cell>
        <Cell>
          <Adobe t="Ps" c="bg-[#071e33] text-[#58abf9]" />
        </Cell>
      </div>
      <div className="mx-[25px] mt-[10px] h-[68px] w-[2px] bg-[#7a5360]" />
      <div className="flex gap-[18px]">
        <Cell dot>
          <span className="flex h-14 w-14 items-center justify-center rounded-[13px] bg-[linear-gradient(180deg,#7b83f2,#5560ea)]">
            <FaDiscord className="mt-[4px] h-[42px] w-[42px] text-white drop-shadow-[0_2px_2px_rgba(0,0,0,0.3)]" />
          </span>
          <span className="absolute -right-[10px] top-[5px] flex h-[27px] w-[33px] items-center justify-center rounded-full bg-[#e0493b] text-[14.500px] leading-none text-white">244</span>
        </Cell>
        <Cell dot>
          <span className="flex h-[58px] w-[58px] shrink-0 items-center justify-center rounded-full bg-[#121712]">
            <FaSpotify className="h-[58px] w-[58px] text-[#67d66f]" />
          </span>
        </Cell>
        <Cell dot>
          <svg className="h-14 w-14" viewBox="0 0 56 56">
            <rect width="56" height="56" rx="13" fill="#1d1f22" />
            <circle cx="28" cy="28" r="24.500" fill="#f5f5f7" />
            {hours.map((h) => (
              <text
                key={h}
                x={28 + 20 * Math.sin((h * Math.PI) / 6)}
                y={28 - 19.5 * Math.cos((h * Math.PI) / 6)}
                fontSize="6.800"
                fontWeight="600"
                textAnchor="middle"
                dominantBaseline="central"
                fill="#222"
              >
                {h}
              </text>
            ))}
            <path d="M28 28L10 15" stroke="#111" strokeWidth="2" strokeLinecap="round" />
            <path d="M28 28L35.500 38.500" stroke="#111" strokeWidth="2.800" strokeLinecap="round" />
            <circle cx="28" cy="28" r="2" fill="#111" />
          </svg>
        </Cell>
        <Cell dot>
          <svg className="h-14 w-14" viewBox="0 0 56 56">
            <defs>
              <linearGradient id="ha" x1="0" x2="0" y1="0" y2="1">
                <stop offset="0" stopColor="#060606" />
                <stop offset="1" stopColor="#6a6a6a" />
              </linearGradient>
            </defs>
            <rect width="56" height="56" rx="13" fill="url(#ha)" />
            <path d="M22 43H12Q7.500 43 7.500 38.500V17Q7.500 12.500 12 12.500H44Q49 12.500 49 17V38.500Q49 43 44 43H38V36a3.800 3.800 0 0 0-8 0V43V28a4 4 0 0 0-8 0z" fill="none" stroke="#f0f0f0" strokeWidth="1.900" strokeLinejoin="round" />
          </svg>
        </Cell>
      </div>
      <div className="mx-[25px] mr-[23px] mt-[10px] h-[68px] w-[2px] bg-[#7a5360]" />
      <div className="flex gap-[18px]">
        <Cell>
          <svg className="h-[62px] w-[48px]" viewBox="0 0 48 62">
            <path d="M1 0H30L47 18V60Q47 62 45 62H2Q0 62 0 60V1z" fill="#f4f4f4" />
            <path d="M30 0L47 18H32Q30 18 30 16z" fill="#d4d4d6" />
            <text x="24" y="38" textAnchor="middle" fontSize="16.500" fontWeight="700" fill="#7c2ed6">
              C++
            </text>
          </svg>
        </Cell>
        <Cell>
          <svg className="h-[56px] w-[36px]" viewBox="0 0 36 56" fill="none" stroke="#b0979f" strokeWidth="5">
            <path d="M3 18Q3 3 18 3Q33 3 33 17Q33 23 26 29Q18 35 18 43" />
            <path d="M18 48V55" />
          </svg>
        </Cell>
        <Cell>
          <svg className="h-[56px] w-[64px] shrink-0" viewBox="0 0 64 56">
            <path d="M0 4Q0 1 3 1H16Q18 1 20 3L25 7H61Q64 7 64 10V20H0z" fill="#4d9cd8" />
            <path d="M0 13Q0 10 3 10H61Q64 10 64 13V52Q64 55 61 55H3Q0 55 0 52z" fill="#7acafa" />
            <path d="M0 50H64V52Q64 55 61 55H3Q0 55 0 52z" fill="#56a9e0" />
          </svg>
        </Cell>
        <Cell>
          <svg className="mt-[3px] h-[58px] w-[46px]" viewBox="0 0 46 58">
            <path d="M1 0H29L46 16V56Q46 58 44 58H1Q0 58 0 56V1z" fill="#f3f3f3" />
            <path d="M29 0L46 16H31Q29 16 29 14z" fill="#d0d0d2" />
            <path d="M3 4H20M3 7H18M3 10H24M3 13H12M3 16H16M3 19H26M3 23H6M3 26H28M3 29H12M3 32H20" stroke="#bcbcbf" strokeWidth="1" />
            <text x="22" y="51" textAnchor="middle" fontSize="14.500" fontWeight="600" fill="#4c4c4e">
              .S
            </text>
          </svg>
        </Cell>
        <Cell>
          <svg className="mb-[1px] h-[64px] w-[50px]" viewBox="0 0 50 64">
            <defs>
              <linearGradient id="ta" x1="0" x2="1" y1="0" y2="0">
                <stop offset="0" stopColor="#64676a" />
                <stop offset="0.300" stopColor="#8d9093" />
                <stop offset="0.600" stopColor="#74777a" />
                <stop offset="1" stopColor="#4c4f52" />
              </linearGradient>
            </defs>
            <ellipse cx="25" cy="9" rx="24.500" ry="5" fill="#a7aaad" />
            <path d="M4 10L7 3L13 4L17 0L23 3L29 1L35 0L40 4L46 6L45 13Q25 19 5 13z" fill="#e6e7e8" />
            <path d="M9 6L14 12L18 3M22 4L27 13L33 2M36 5L41 12L44 7M13 9H19M29 9H36" stroke="#6f5a4e" strokeWidth="1.300" fill="none" />
            <path d="M15 8L19 6L20 11zM31 5L35 6L33 10z" fill="#3f9ec0" />
            <path d="M0.500 9Q4 15.500 25 15.500Q46 15.500 49.500 9L43.500 58Q42 64 25 64Q8 64 6.500 58z" fill="url(#ta)" opacity="0.960" />
          </svg>
        </Cell>
      </div>
    </div>
  );
}

/* ---------- App ---------- */

export default function App() {
  return (
    <div className="relative flex h-[1800px] w-[2880px] flex-col overflow-hidden font-['Inter',sans-serif]">
      <Wallpaper />
      <MenuBar />
      <div className="relative mt-px h-[1645px] shrink-0 overflow-hidden rounded-[20px] border-t border-black shadow-[0_0_0_1px_#000]">
        <Toolbar />
        <TabBar />
        <div className="flex h-[1419px] border-t border-[#b9b7b6]">
          <LeftPanel />
          <div className="w-[24px] shrink-0 border-x border-[#e4e4e4] bg-[#fafafa] pt-[352px]">
            <div className="mx-auto h-[1062px] w-[17px] rounded-full bg-[#7e7e7e]" />
          </div>
          <Preview />
        </div>
        <footer className="flex h-16 items-center bg-[#f3f4fa] pl-[29px] pr-[31px] text-[24px] text-[#7f8694]">
          <span className="pt-px tracking-[0.300px]">© 2023 Works Limited. Wszystkie prawa zastrzeżone.</span>
          <span className="ml-auto pt-px tracking-[0.600px]">Regulamin</span>
          <span className="ml-[30px] pt-px tracking-[0.280px]">Polityka prywatności</span>
          <span className="ml-[31px] pt-px tracking-[0.900px]">Kontakt</span>
        </footer>
      </div>
      <Dock />
    </div>
  );
}
